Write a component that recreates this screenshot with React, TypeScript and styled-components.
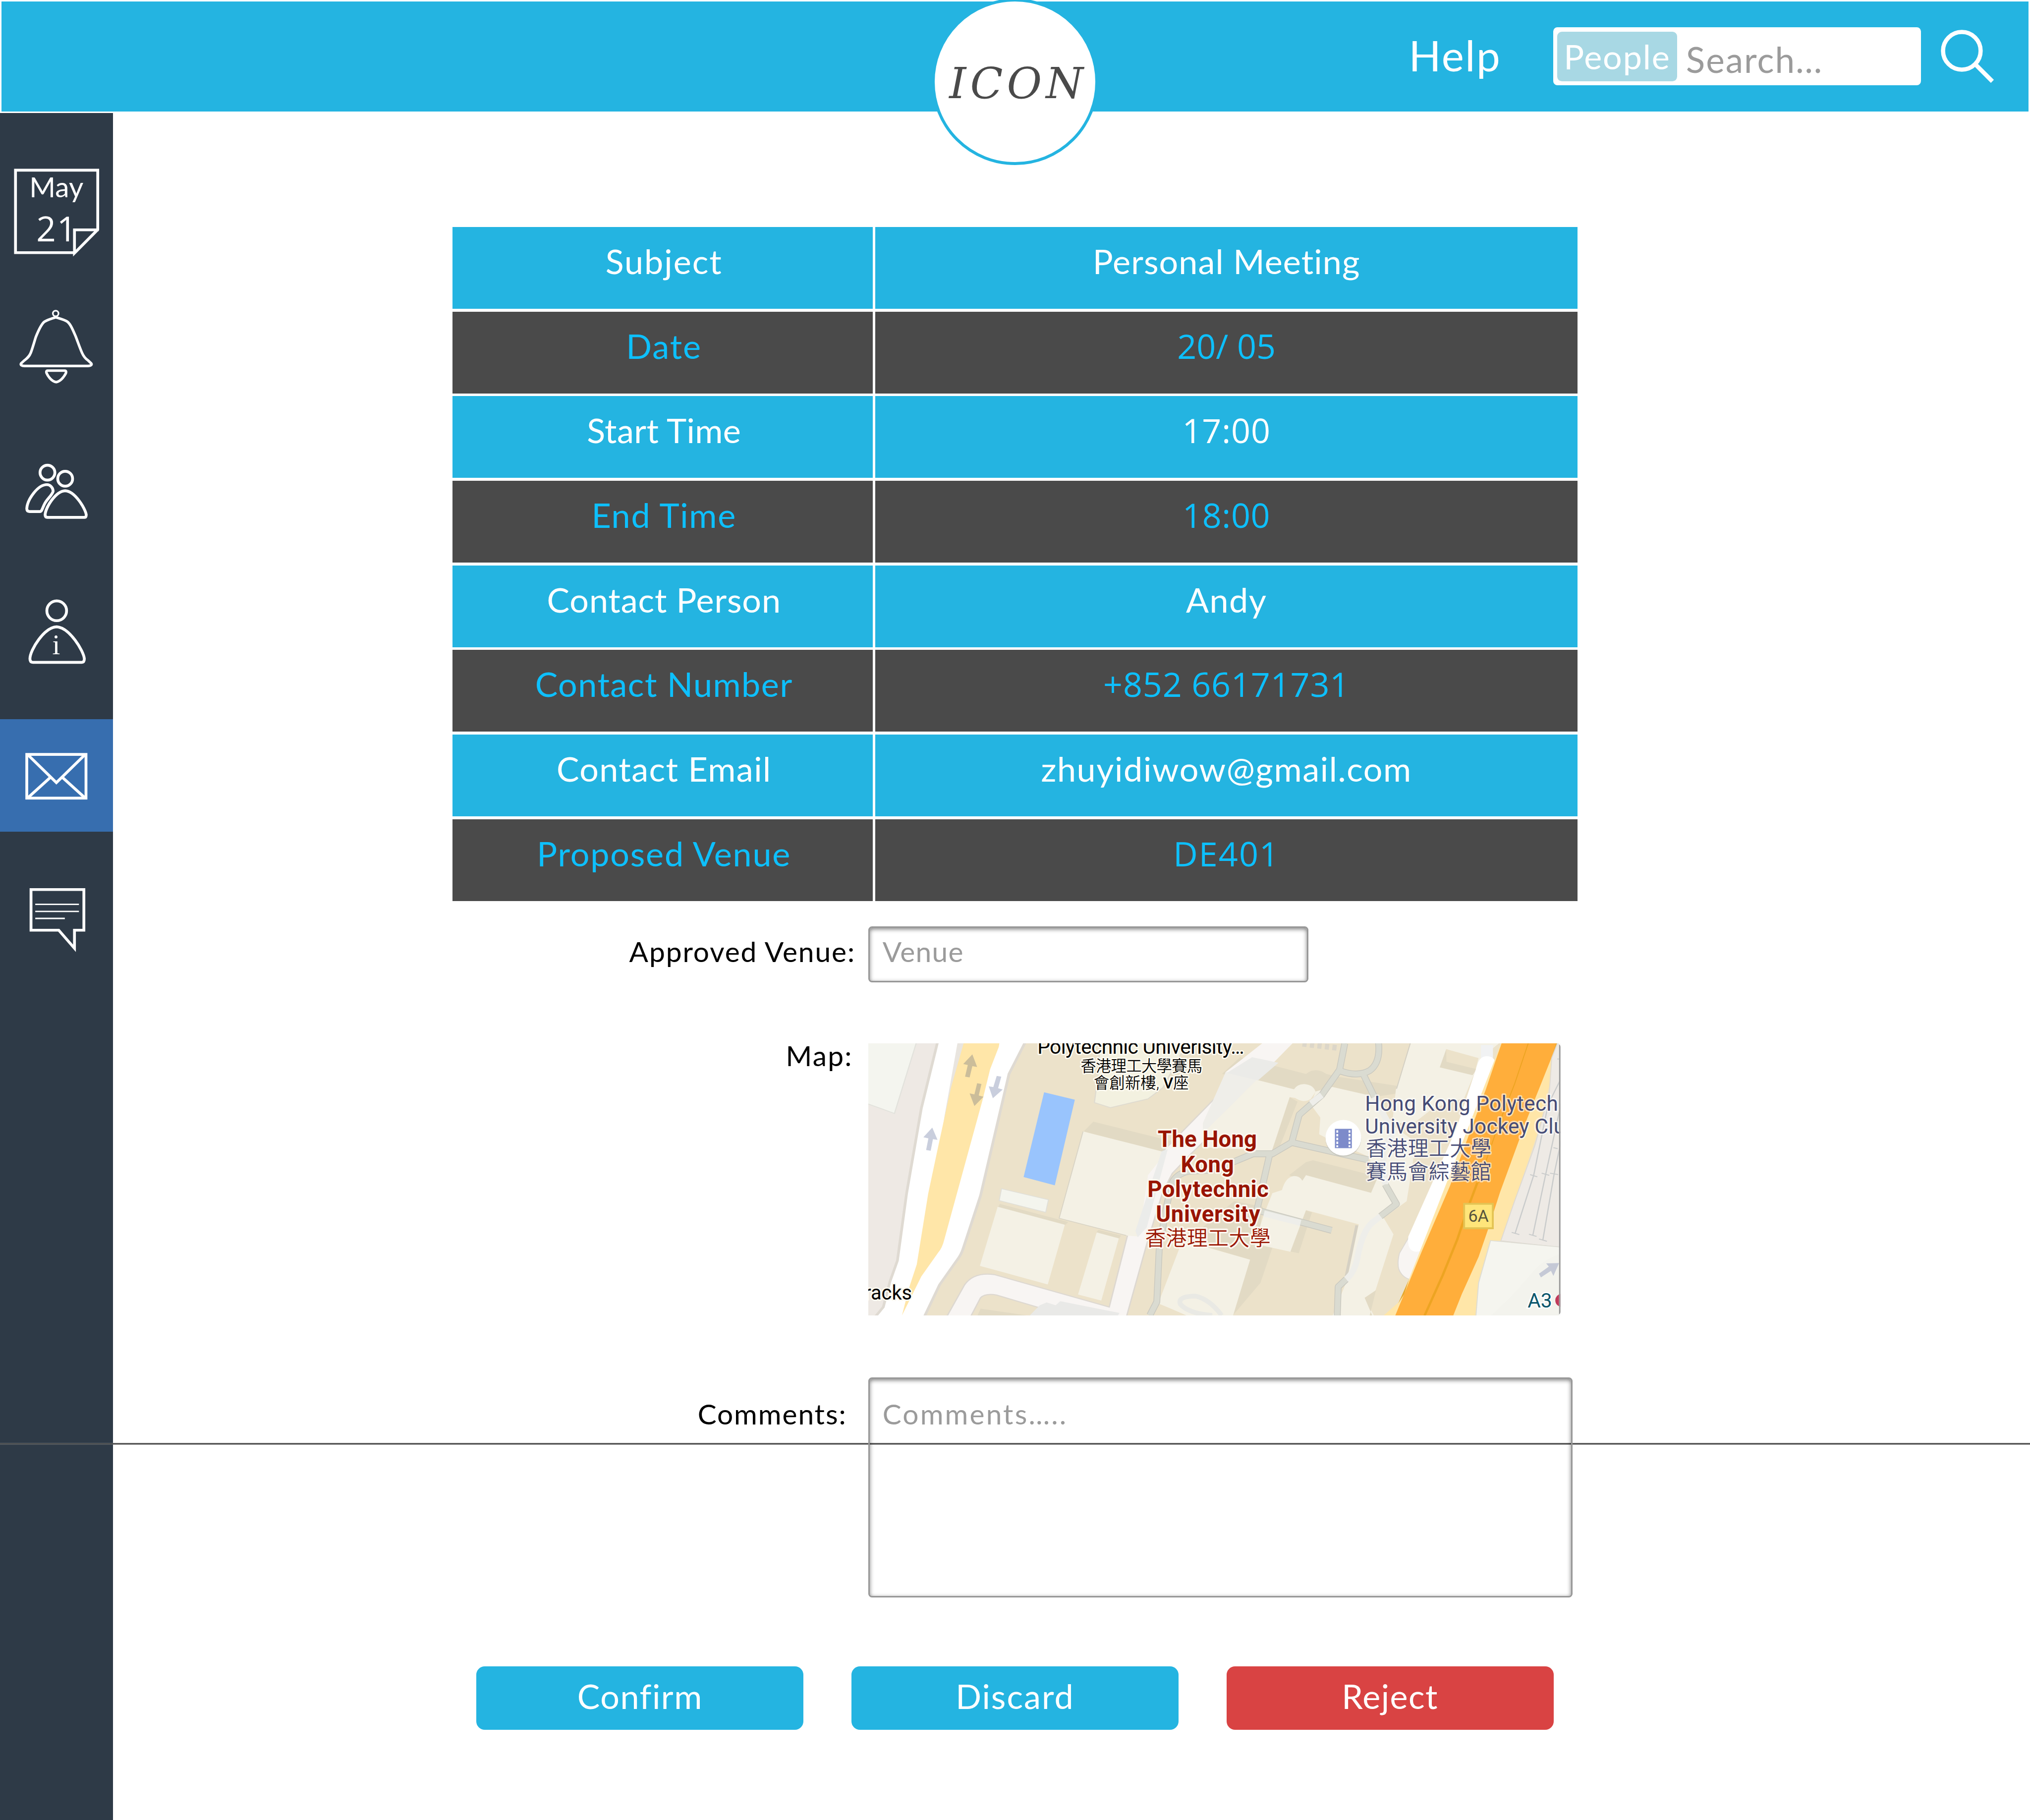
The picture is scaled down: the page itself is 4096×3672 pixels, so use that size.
import React from 'react';
import styled, { createGlobalStyle } from 'styled-components';

/* 1rem is a hundred design pixels on the 4320-wide artboard. */
const GlobalStyle = createGlobalStyle`
  html { font-size: calc(100vw / 43.2); }
  body { margin: 0; background: #fff; }
  *, *::before, *::after { box-sizing: border-box; }
`;

const color = {
  sky: '#24b4e1',
  slate: '#4a4a4a',
  navy: '#2e3a47',
  active: '#376eaf',
  chip: '#a8d8e4',
  red: '#d94343',
  cyan: '#0dc0ff',
  border: '#979797',
  hint: '#9b9b9b',
};

const textFont = 'Lato, "Open Sans", sans-serif';
const numberFont = '"Open Sans", Lato, sans-serif';

const Page = styled.div`
  position: relative;
  isolation: isolate;
  display: flex;
  flex-direction: column;
  width: 43.2rem;
  height: 100vh;
  overflow: hidden;
  font-family: ${textFont};
  background: #fff;
`;

/* ---------- header ---------- */

const Header = styled.header`
  position: relative;
  flex: none;
  display: flex;
  align-items: center;
  justify-content: flex-end;
  height: 2.4rem;
  padding-right: 0.71rem;
  border: 3px solid #fff;
  background: ${color.sky};
`;

const Logo = styled.div`
  position: absolute;
  z-index: 2;
  left: 50%;
  top: -0.06rem;
  display: flex;
  justify-content: center;
  width: 3.54rem;
  height: 3.54rem;
  margin-left: -1.77rem;
  padding: 1.2rem 0 0 0.14rem;
  border: 6px solid ${color.sky};
  border-radius: 50%;
  background: #fff;
  color: ${color.slate};
  font: italic 0.91rem/1.2 "DejaVu Serif", serif;
  letter-spacing: 0.085rem;
`;

const HelpLink = styled.a`
  margin: 0 1.1rem 0.06rem 0;
  color: #fff;
  font-size: 0.9rem;
  line-height: 1.2;
  letter-spacing: 0.029em;
`;

const SearchBox = styled.div`
  display: flex;
  width: 7.83rem;
  height: 1.23rem;
  padding: 0.09rem;
  border-radius: 0.09rem;
  background: #fff;
`;

const SearchScope = styled.span`
  display: flex;
  justify-content: center;
  width: 2.55rem;
  height: 1.05rem;
  padding-top: 0.11rem;
  border-radius: 0.1rem;
  background: ${color.chip};
  color: #fff;
  font-size: 0.72rem;
  line-height: 0.86rem;
  letter-spacing: 0.027em;
`;

const SearchHint = styled.span`
  padding: 0.16rem 0 0 0.19rem;
  color: ${color.hint};
  font-size: 0.75rem;
  line-height: 0.86rem;
  letter-spacing: 0.028em;
`;

const SearchIcon = styled.svg`
  width: 1.2rem;
  height: 1.2rem;
  margin-left: 0.38rem;
`;

/* ---------- sidebar ---------- */

const Body = styled.div`
  flex: 1;
  display: flex;
  min-height: 0;
`;

const Sidebar = styled.nav`
  flex: none;
  display: flex;
  flex-direction: column;
  gap: 0.6rem;
  width: 2.4rem;
  padding-top: 0.9rem;
  background: ${color.navy};
`;

const NavItem = styled.a<{ $active?: boolean }>`
  height: 2.4rem;
  background: ${(p) => (p.$active ? color.active : 'transparent')};
`;

const NavIcon = styled.svg`
  display: block;
  width: 2.4rem;
  height: 2.4rem;
  fill: none;
  stroke: #fff;
  stroke-width: 6;

  text {
    fill: #fff;
    stroke: none;
    text-anchor: middle;
  }
`;

/* ---------- content ---------- */

const Main = styled.main`
  display: flex;
  flex-direction: column;
  padding: 2.43rem 0 0 7.23rem;
`;

const Details = styled.div`
  display: grid;
  grid-template-columns: 8.94rem 14.94rem;
  grid-auto-rows: 1.74rem;
  gap: 0.06rem;
`;

const Cell = styled.div<{ $dark: boolean; $track: number; $numeric?: boolean }>`
  display: flex;
  align-items: center;
  justify-content: center;
  padding-bottom: 0.28rem;
  background: ${(p) => (p.$dark ? color.slate : color.sky)};
  color: ${(p) => (p.$dark ? color.cyan : '#fff')};
  font-family: ${(p) => (p.$numeric ? numberFont : textFont)};
  font-size: 0.72rem;
  line-height: 1;
  letter-spacing: ${(p) => p.$track / 72}em;
  white-space: nowrap;

  &:nth-child(odd) {
    padding-left: 0.06rem;
  }
`;

const FormRow = styled.div<{ $gap: number }>`
  display: flex;
  align-items: flex-start;
  margin-top: ${(p) => p.$gap}rem;
`;

const Label = styled.label<{ $drop: number; $inset: number; $track: number }>`
  width: 8.85rem;
  padding: ${(p) => p.$drop}rem ${(p) => p.$inset}rem 0 0;
  color: #000;
  font-size: 0.6rem;
  line-height: 0.5rem;
  letter-spacing: ${(p) => p.$track / 60}em;
  text-align: right;
`;

const Field = styled.div<{ $w: number; $h: number; $drop: number; $track: number }>`
  width: ${(p) => p.$w}rem;
  height: ${(p) => p.$h}rem;
  padding: ${(p) => p.$drop - 0.03}rem 0 0 0.27rem;
  border: 3px solid ${color.border};
  border-radius: 0.08rem;
  box-shadow: inset 0 0.03rem 0.09rem rgba(0, 0, 0, 0.5);
  color: ${color.hint};
  font-size: 0.6rem;
  line-height: 0.5rem;
  letter-spacing: ${(p) => p.$track / 60}em;
`;

const MapView = styled.svg`
  display: block;
  width: 14.73rem;
  height: 5.79rem;
  font-family: Roboto, "Noto Sans CJK TC", sans-serif;
`;

const Actions = styled.div`
  display: flex;
  gap: 1.02rem;
  margin-top: 1.47rem;
  padding-left: 0.51rem;
`;

const Button = styled.button<{ $danger?: boolean; $track: number }>`
  width: 6.96rem;
  height: 1.35rem;
  padding: 0 0 0.09rem;
  border: 0;
  border-radius: 0.18rem;
  background: ${(p) => (p.$danger ? color.red : color.sky)};
  color: #fff;
  font-family: ${textFont};
  font-size: 0.72rem;
  line-height: 1;
  letter-spacing: ${(p) => p.$track / 72}em;
`;

/* The fold marker crosses the content, behind the outlined fields. */
const FoldLine = styled.div`
  position: absolute;
  z-index: -1;
  top: 30.7rem;
  left: 0;
  width: 100%;
  height: 4px;
  border: solid ${color.border};
  border-width: 1px 0;
  background: ${color.slate};
`;

const SidebarFold = styled(FoldLine)`
  z-index: 1;
  width: 2.4rem;
  border-color: #56606a;
`;

/* ---------- data ---------- */

type Entry = { text: string; track: number; numeric?: boolean };

const rows: [Entry, Entry][] = [
  [{ text: 'Subject', track: 2.1 }, { text: 'Personal Meeting', track: 1.15 }],
  [{ text: 'Date', track: 2.1 }, { text: '20/ 05', track: 0, numeric: true }],
  [{ text: 'Start Time', track: 0.4 }, { text: '17:00', track: 0.9, numeric: true }],
  [{ text: 'End Time', track: 1.8 }, { text: '18:00', track: 0.65, numeric: true }],
  [{ text: 'Contact Person', track: 0.9 }, { text: 'Andy', track: 1.5 }],
  [{ text: 'Contact Number', track: 1.6 }, { text: '+852 66171731', track: 0.9, numeric: true }],
  [{ text: 'Contact Email', track: 1.5 }, { text: 'zhuyidiwow@gmail.com', track: 1.7 }],
  [{ text: 'Proposed Venue', track: 1.9 }, { text: 'DE401', track: 2.2, numeric: true }],
];

/* ---------- icons ---------- */

const CalendarIcon = () => (
  <NavIcon viewBox="0 330 240 240">
    <path d="M158.5 537.5H33V362H208V488.5L158.5 538.5V489H210" />
    <text x="120" y="419.5" fontSize="60">May</text>
    <text x="121" y="513.5" fontSize="73" fontFamily="Open Sans" letterSpacing="2">21</text>
  </NavIcon>
);

const BellIcon = () => (
  <NavIcon viewBox="0 630 240 240">
    <circle cx="118.5" cy="667.5" r="6" strokeWidth="3.5" />
    <path
      strokeWidth="5.5"
      d="M118.5 675.5C110 678 100 681 94.5 685C88 690 82 703 76 718C72 731 69 742 65.5 751C62 760 57 763 51 768L45 773.5C43 777 46 779 52 779H187C194 779 196 776 194 773.5L187 767C181 763 178 759 174.500 751C170 741 166 729 161 716C155 702 150 690 143.500 685C138 681 126 678 118.500 675.500Z"
    />
    <path strokeWidth="5.5" d="M101 789H138C141 789 141 792 140 795C136 803 128 812 119.500 813.500C111 812 103 803 99.500 795C98 792 98.500 789 101 789Z" />
  </NavIcon>
);

const PeopleIcon = () => (
  <NavIcon viewBox="0 930 240 240">
    <circle cx="101" cy="1005.500" r="15.800" />
    <circle cx="138.700" cy="1018.500" r="15.800" />
    <path d="M100 1031C107 1031 113 1038 113 1045C112 1052 100 1062 96 1070C93 1075 91 1081 89 1085Q87.500 1088.300 85 1088.300H63Q57 1088.300 57 1082C58 1063 80 1031 100 1031Z" />
    <path d="M138.700 1044C160 1045 182 1083 183.500 1095Q183.500 1100.700 180 1100.700H101Q96 1100.700 96 1095C97 1080 118 1045 138.700 1044Z" />
  </NavIcon>
);

const ContactIcon = () => (
  <NavIcon viewBox="0 1230 240 240">
    <circle cx="120.700" cy="1300" r="21" />
    <path d="M120.700 1334C148 1336 178 1385 179.500 1402Q179.500 1409.700 174 1409.700H70Q63.700 1409.700 63.700 1402C64 1383 94 1335 120.700 1334Z" />
    <text x="119.500" y="1392" fontSize="60" fontFamily="Liberation Serif">i</text>
  </NavIcon>
);

const MailIcon = () => (
  <NavIcon viewBox="0 1530 240 240">
    <rect x="57" y="1605" width="126" height="93" />
    <path d="M59 1605.500L120 1665L181 1605.500M59 1697.500L107 1654M181 1697.500L133 1654" />
  </NavIcon>
);

const ChatIcon = () => (
  <NavIcon viewBox="0 1830 240 240">
    <path d="M66 1893H178.500V1979.500H158.500V2018L125 1979.500H66Z" />
    <path strokeWidth="3" d="M75 1924.500H168M75 1939.500H168M75 1954.500H138" />
  </NavIcon>
);

/* ---------- campus map ---------- */

const west = 'translate(1830 2200) scale(.48469 .3954)';
const east = 'translate(2560 2200) scale(.5102 .3954)';

const CampusMap = () => (
  <MapView viewBox="1848 2220 1473 579">
    <rect x="1848" y="2220" width="1473" height="579" fill="#ece2ca" />

    {/* main roads on the west side */}
    <g transform={west}>
      <path fill="#eee9e4" d="M30 40H345L205 860L165 1220L105 1470L60 1520H30Z" />
      <path fill="#f4f5ef" stroke="#e2e2dc" strokeWidth="5" d="M30 40H250L152 428L30 374Z" />
      <path fill="#fff" stroke="#dfdad2" strokeWidth="12" d="M342 40H728L655 215L530 870L455 1150Q445 1190 425 1220L350 1350L282 1525H66L103 1470L133 1330L165 1220L205 860L270 400Z" />
      <path fill="#e9e5df" d="M430 40H460L390 440L345 660L372 440Z" />
      <path fill="#ffe6a8" d="M458 40H614L610 70L572 190L540 350L370 1110Q362 1150 345 1175L270 1305L185 1515L215 1370L250 1240L300 860L345 600L400 290Z" />
      <g fill="#cbbd9a">
        <path d="M494 110L515 178L494 173L482 234L462 230L474 167L454 162Z" />
        <path d="M503 388L482 320L503 325L515 265L534 269L522 331L543 338Z" />
      </g>
      <g fill="#c9cedd">
        <path d="M318 504L341 570L321 566L311 629L291 625L301 562L279 556Z" />
        <path d="M584 346L566 282L586 286L601 226L621 230L607 292L627 299Z" />
      </g>
    </g>

    {/* service road through the campus */}
    <g transform={west}>
      <path fill="#f8f5f3" stroke="#ddd8d1" strokeWidth="6" d="M1170 1525L1260 1130L1330 850L1372 750L1450 650L1568 510L1680 330L1895 40H1780L1568 335L1340 620L1280 700Q1245 760 1235 850L1175 1085L1095 1470L590 1295Q500 1280 460 1350L380 1525H485L530 1420Q550 1395 600 1405L930 1525Z" />
      <path fill="#e9e9e7" d="M742 1520L790 1460L820 1445L860 1460L880 1438L1140 1502L1130 1520Z" />
      <path fill="#e2dac4" d="M530 1478L760 1520H515Z" />
    </g>

    {/* western buildings and the pool */}
    <g transform={west}>
      <path fill="#f3f1e0" stroke="#dfdbd0" strokeWidth="5" d="M1055 40H1440L1330 290L1265 350L1100 397L1030 370L1045 230Z" />
      <path fill="#99c4fd" d="M809 314L944 354L856 815L719 770Z" />
      <path fill="#e2dac4" d="M1025 472L1368 577L1325 635L983 525Z" />
      <path fill="#f4f1e5" d="M980 525L1325 632L1330 660L1265 760L1225 1090L1170 1085L875 992Z" />
      <path fill="#ebecea" d="M1325 632L1352 620L1260 1040L1220 1095L1210 1060Z" />
      <path fill="none" stroke="#d8d3c5" strokeWidth="4" d="M980 525L875 992L1170 1085" />
      <path fill="#f4f5ee" stroke="#e0dfd8" strokeWidth="4" d="M622 833L828 892L816 960L612 897Z" />
      <path fill="#e2dac4" d="M615 915L915 1012L900 1030L605 935Z" />
      <path fill="#f4f1e5" d="M605 930L900 1027L825 1348L527 1248Z" />
      <path fill="#e2dac4" d="M1047 1055L1147 1085L1137 1103L1038 1070Z" />
      <path fill="#f4f1e5" d="M1040 1068L1137 1100L1060 1435L958 1402Z" />
    </g>

    {/* eastern buildings with their shadows */}
    <g transform={east}>
      <path fill="#e2dac4" d="M155 125L430 215Q470 175 515 215L560 230L812 280V320L710 340L540 285L465 320L380 298L80 215Z" />
      <path fill="#e2dac4" d="M362 340L395 365L310 640L285 640ZM430 690L460 680L735 770L710 860L420 795L360 760Z" />
      <path fill="#f4f1e5" d="M95 205L380 298Q395 268 425 270Q462 275 470 312L450 350Q420 375 385 345L362 340L285 640L190 622L0 610L30 460Z" />
      <path fill="#efeee9" d="M95 205L0 480V560L20 510L230 240Z" />
      <path fill="#f8f5f3" d="M258 40H382L230 240L95 205Z" />
      <path fill="#ebebe8" d="M205 125L315 155L230 250L100 210Z" />
      <path fill="#f4f1e5" d="M470 310L540 285L710 335L760 420L800 500L885 580L875 700L850 900L760 985L700 860L730 770L690 660L515 560L485 540L490 450L450 380Z" />
      <path fill="#f4f1e5" d="M870 40H1245L1170 120L1140 190L1090 345L960 400L880 480H790L805 300Z" />
      <path fill="#e2dac4" d="M1015 82L988 180L1125 222L1143 188L1020 150L1032 90Z" />
      <path fill="#ece2ca" d="M1015 82L1150 130L1138 188L1016 150Z" />
      <path fill="none" stroke="#d3cfc3" strokeWidth="4" d="M865 51L808 295" />
      <path fill="#e2dac4" d="M130 900L250 930L230 1130L290 1150L240 1340L125 1515H60L195 1215L0 1140V1040Z" />
      <path fill="#e2dac4" d="M430 950L455 960L400 1180L362 1170Z" />
      <path fill="#f4f1e5" d="M415 790Q405 765 380 765Q345 770 330 840L290 857L255 970L215 1130L365 1172L430 948L650 1025L600 1330L540 1520H715L675 1420L720 1380L795 1078L745 970L830 890V860L710 858L430 760Z" />
      <path fill="#f4f1e5" d="M-186 1450L-91 1130L0 1142L197 1215L125 1520H-60L-130 1480Z" />
      <path fill="none" stroke="#d5d0c3" strokeWidth="12" d="M642 1030L595 1320" />
      <path fill="#e2dac4" d="M675 1420L722 1380L695 1520H708Z" />
    </g>

    {/* footpaths */}
    <g fill="none" strokeLinejoin="round">
      <g stroke="#c9c8bf" strokeWidth="14.500">
        <path d="M2447 2799L2462 2770L2467 2660L2480 2580L2493 2520Q2502 2498 2530 2492L2580 2490" />
        <path d="M2580 2490L2626 2472L2667 2455H2708L2749 2431L2765 2372L2813 2330L2851 2276L2862 2220" />
        <path d="M2853 2279Q2890 2292 2915 2278Q2940 2260 2933 2212M2902 2287L2925 2334M2749 2431L2912 2468M2702 2457L2675 2575L2834 2618" />
        <path d="M2846 2799L2848 2738L2865 2722M2938 2588L2972 2562L2948 2520" />
      </g>
      <g stroke="#dadbd1" strokeWidth="11.500">
        <path d="M2447 2799L2462 2770L2467 2660L2480 2580L2493 2520Q2502 2498 2530 2492L2580 2490" />
        <path d="M2580 2490L2626 2472L2667 2455H2708L2749 2431L2765 2372L2813 2330L2851 2276L2862 2220" />
        <path d="M2853 2279Q2890 2292 2915 2278Q2940 2260 2933 2212M2902 2287L2925 2334M2749 2431L2912 2468M2702 2457L2675 2575L2834 2618" />
        <path d="M2846 2799L2848 2738L2865 2722M2938 2588L2972 2562L2948 2520" />
      </g>
      <path stroke="#eeeeea" strokeWidth="13" d="M2865 2722Q2885 2705 2890 2670Q2900 2620 2920 2602L2938 2588M2948 2520L2943 2450L2965 2410L2925 2334M2690 2582L2768 2602M2813 2330L2790 2348" />
      <path stroke="#e9e9e4" strokeWidth="10" d="M2600 2799Q2575 2765 2545 2758Q2505 2758 2512 2775Q2530 2795 2580 2799" />
      <path stroke="#dcd6c9" strokeWidth="12" strokeDasharray="9 7" d="M2772 2221L2848 2230" />
    </g>

    {/* expressway and rail yard on the east side */}
    <g transform={east}>
      <path fill="#f8f5f3" stroke="#ddd9d2" strokeWidth="4" d="M870 1070L820 1180Q810 1230 817 1265Q830 1310 865 1322L920 1165Z" />
      <path fill="none" stroke="#f1f2f3" strokeWidth="50" d="M1185 60V150" />
      <path fill="#fff" d="M1185 120Q1155 120 1145 165L1060 500L940 850L857 1090Q850 1170 890 1172Q912 1172 918 1155L1030 830L1180 300L1222 160Q1215 120 1185 120Z" />
      <path fill="#ffe6a8" d="M1247 40H1482L1455 230L1400 520L1245 1112H1200L1150 1340L1138 1520H750L825 1435Z" />
      <path fill="#e6a72b" d="M1440 40H1480L1455 140ZM860 1320L815 1450L840 1400Z" />
      <path fill="#ffae3b" d="M1249 40H1476L1455 125L1345 480L1240 850L1190 1050L1150 1200L1080 1400L1043 1520H801L865 1320L915 1165L1030 820L1180 300L1222 140Z" />
      <path fill="none" stroke="#eda422" strokeWidth="4" d="M1357 51L1300 270L1230 500L1150 800" />
      <path fill="none" stroke="#eda422" strokeWidth="10" d="M1145 800L1110 920L1060 1110L1000 1300L925 1515" />
      <path fill="#eeeae5" stroke="#dfdad2" strokeWidth="4" d="M1455 130L1482 40H1500V1150L1243 1113L1300 900L1385 600L1445 320Z" />
      <g fill="none" stroke="#c9cbcb" strokeWidth="5">
        <path d="M1490 250L1440 380L1380 760L1302 1075M1500 340L1430 755L1376 1085M1500 540L1465 755L1418 1110" />
        <path d="M1288 1068L1320 1080M1360 1078L1392 1090M1402 1103L1435 1116M1365 757L1395 769M1413 749L1445 761M1448 749L1482 757M1478 135H1490M1462 612L1480 618" />
      </g>
      <path fill="#f5f5ef" stroke="#dddcd4" strokeWidth="4" d="M1200 1112L1500 1148V1530H1138L1150 1340Z" />
      <path fill="#f3f3ed" d="M1190 1530Q1300 1400 1370 1290Q1420 1210 1500 1180V1530Z" />
      <path fill="#c5c9d6" d="M1486 1233L1462 1302L1452 1275L1410 1310L1402 1290L1443 1252L1432 1235Z" />
    </g>

    {/* place marker */}
    <circle cx="2859" cy="2423" r="38" fill="#b9b6ab" opacity=".6" />
    <circle cx="2859" cy="2421" r="38" fill="#fff" />
    <path fill="#7d8bca" d="M2841 2402H2877V2443H2841Z" />
    <path stroke="#fff" strokeWidth="4" strokeDasharray="5 3" d="M2846 2405V2441M2872 2405V2441" />

    <g fill="#000" stroke="#fdfaf0" strokeWidth="6" strokeLinejoin="round" paintOrder="stroke">
      <text x="2208" y="2242" fontSize="43" fontWeight="450" textLength="440">Polytechnic Univerisity…</text>
      <g fontSize="33" fontWeight="350">
        <text x="2300" y="2280" textLength="259">香港理工大學賽馬</text>
        <text x="2328" y="2316" textLength="202">會創新樓, <tspan fontWeight="500">V</tspan>座</text>
      </g>
      <text x="1941" y="2765" fontSize="42" textAnchor="end">Tracks</text>
    </g>
    <g fill="#991400" stroke="#fbf6ee" strokeWidth="7" strokeLinejoin="round" paintOrder="stroke" fontSize="48" fontWeight="700">
      <text x="2464" y="2440" textLength="211">The Hong</text>
      <text x="2513" y="2494" textLength="113">Kong</text>
      <text x="2442" y="2547" textLength="258">Polytechnic</text>
      <text x="2460" y="2600" textLength="222">University</text>
      <text x="2437" y="2650" textLength="267" fontSize="44" fontWeight="350">香港理工大學</text>
    </g>
    <g fill="#454b76" stroke="#fff" strokeOpacity=".6" strokeWidth="6" strokeLinejoin="round" paintOrder="stroke" fontSize="44.500" fontWeight="450">
      <text x="2905" y="2363" textLength="411">Hong Kong Polytech</text>
      <text x="2905" y="2412" textLength="426">University Jockey Clu</text>
      <text x="2907" y="2459" textLength="267" fontSize="44" fontWeight="350">香港理工大學</text>
      <text x="2907" y="2509" textLength="267" fontSize="44" fontWeight="350">賽馬會綜藝館</text>
    </g>
    <rect x="3116" y="2561.500" width="61" height="52" fill="#ffe57a" stroke="#e3c354" strokeWidth="4" />
    <text x="3146.500" y="2600" fontSize="36" fill="#56533c" textAnchor="middle">6A</text>
    <text x="3251" y="2782.500" fontSize="43" fill="#0b566b" stroke="#fff" strokeWidth="5" paintOrder="stroke">A3</text>
    <circle cx="3324" cy="2767" r="14" fill="#c03a5b" />

    {/* frame edge */}
    <rect x="3318" y="2220" width="3" height="579" fill="#fff" />
    <path d="M3318 2222Q3321 2224 3321 2228V2791Q3321 2795 3318 2797Z" fill="#979797" />
  </MapView>
);

/* ---------- page ---------- */

export default function App() {
  return (
    <>
      <GlobalStyle />
      <Page>
        <Header>
          <Logo>ICON</Logo>
          <HelpLink>Help</HelpLink>
          <SearchBox>
            <SearchScope>People</SearchScope>
            <SearchHint>Search…</SearchHint>
          </SearchBox>
          <SearchIcon viewBox="0 0 120 120" fill="none" stroke="#fff" strokeWidth="9">
            <circle cx="49" cy="48" r="40" />
            <path d="M78 77L114 113" />
          </SearchIcon>
        </Header>

        <Body>
          <Sidebar>
            <NavItem><CalendarIcon /></NavItem>
            <NavItem><BellIcon /></NavItem>
            <NavItem><PeopleIcon /></NavItem>
            <NavItem><ContactIcon /></NavItem>
            <NavItem $active><MailIcon /></NavItem>
            <NavItem><ChatIcon /></NavItem>
          </Sidebar>

          <Main>
            <Details>
              {rows.map((row, i) =>
                row.map((cell) => (
                  <Cell key={cell.text} $dark={i % 2 === 1} $track={cell.track} $numeric={cell.numeric}>
                    {cell.text}
                  </Cell>
                )),
              )}
            </Details>

            <FormRow $gap={0.54}>
              <Label $drop={0.29} $inset={0.275} $track={2}>Approved Venue:</Label>
              <Field $w={9.36} $h={1.2} $drop={0.29} $track={1.3}>Venue</Field>
            </FormRow>
            <FormRow $gap={1.29}>
              <Label $drop={0.01} $inset={0.33} $track={2.4}>Map:</Label>
              <CampusMap />
            </FormRow>
            <FormRow $gap={1.32}>
              <Label $drop={0.53} $inset={0.46} $track={2}>Comments:</Label>
              <Field $w={14.99} $h={4.68} $drop={0.53} $track={3.3}>Comments…..</Field>
            </FormRow>

            <Actions>
              <Button $track={1.6}>Confirm</Button>
              <Button $track={2.1}>Discard</Button>
              <Button $danger $track={1.5}>Reject</Button>
            </Actions>
          </Main>
        </Body>
        <FoldLine />
        <SidebarFold />
      </Page>
    </>
  );
}
